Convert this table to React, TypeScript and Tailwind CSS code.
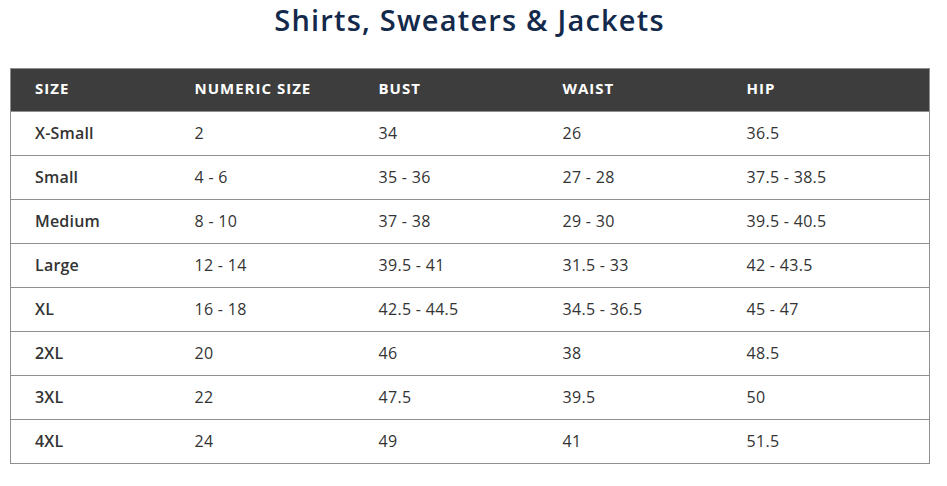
import React from "react";

const rows = [
  ["X-Small", "2", "34", "26", "36.5"],
  ["Small", "4 - 6", "35 - 36", "27 - 28", "37.5 - 38.5"],
  ["Medium", "8 - 10", "37 - 38", "29 - 30", "39.5 - 40.5"],
  ["Large", "12 - 14", "39.5 - 41", "31.5 - 33", "42 - 43.5"],
  ["XL", "16 - 18", "42.5 - 44.5", "34.5 - 36.5", "45 - 47"],
  ["2XL", "20", "46", "38", "48.5"],
  ["3XL", "22", "47.5", "39.5", "50"],
  ["4XL", "24", "49", "41", "51.5"],
];

const heads = ["SIZE", "NUMERIC SIZE", "BUST", "WAIST", "HIP"];
const widths = ["w-[160px]", "w-[184px]", "w-[184px]", "w-[184px]", "w-[207px]"];

export default function App() {
  return (
    <div className="bg-white w-[947px] h-[486px] pl-[10px] pt-[2px]" style={{ fontFamily: "'Open Sans', 'Liberation Sans', sans-serif" }}>
      <div className="w-[919px]">
        <h1 className="text-center text-[29px] leading-[36px] font-semibold text-[#13294b] h-[66px] tracking-[1.2px]">
          Shirts, Sweaters &amp; Jackets
        </h1>
        <table className="w-[919px] border-collapse table-fixed border border-[#8f8f8f]">
          <thead>
            <tr className="bg-[#3d3d3d] h-[43px]">
              {heads.map((h, i) => (
                <th key={h} className={`${widths[i]} text-left pl-[24px] pb-[3px] text-white text-[15px] font-bold tracking-[1px]`}>
                  {h}
                </th>
              ))}
            </tr>
          </thead>
          <tbody>
            {rows.map((r, ri) => (
              <tr key={ri} className="h-[44px] border-t border-[#8f8f8f]">
                {r.map((c, ci) => (
                  <td key={ci} className={`pl-[24px] pb-[1px] text-[16px] text-[#333333] ${ci === 0 ? "font-semibold tracking-[0.2px]" : "font-normal tracking-[0.3px]"}`}>
                    {c}
                  </td>
                ))}
              </tr>
            ))}
          </tbody>
        </table>
      </div>
    </div>
  );
}
